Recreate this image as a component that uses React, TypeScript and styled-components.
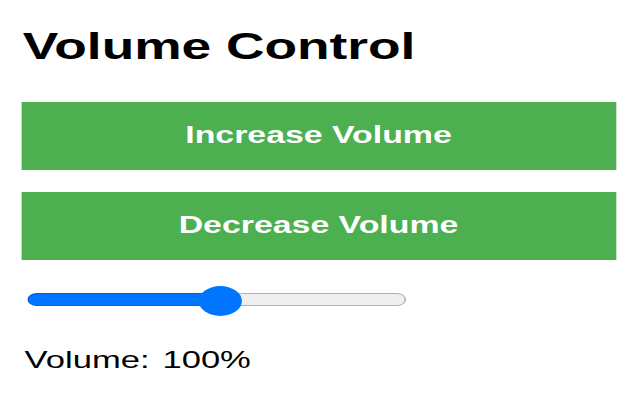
import React, { useState } from 'react';
import styled, { createGlobalStyle } from 'styled-components';

const STRETCH = 1.44;

const GlobalStyle = createGlobalStyle`
  html, body {
    margin: 0;
    padding: 0;
    background: #ffffff;
  }
  body {
    font-family: "Liberation Sans", Arial, sans-serif;
    overflow: hidden;
  }
`;

function App() {
  const [volume, setVolume] = useState(51);

  const increase = () => setVolume((v) => Math.min(100, v + 10));
  const decrease = () => setVolume((v) => Math.max(0, v - 10));

  return (
    <>
      <GlobalStyle />
      <Page>
        <Title>Volume Control</Title>
        <Buttons>
          <ActionButton onClick={increase}>Increase Volume</ActionButton>
          <ActionButton onClick={decrease}>Decrease Volume</ActionButton>
        </Buttons>
        <Slider
          type="range"
          min={0}
          max={100}
          value={volume}
          onChange={(e) => setVolume(Number(e.target.value))}
          style={{ ['--fill' as string]: `${volume}%` }}
        />
        <Label>
          Volume:<Value>100%</Value>
        </Label>
      </Page>
    </>
  );
}

export default App;

const Page = styled.main`
  width: ${640 / STRETCH}px;
  box-sizing: border-box;
  padding: 27.6px 0 0 14.6px;
  display: flex;
  flex-direction: column;
  transform: scaleX(${STRETCH});
  transform-origin: 0 0;
`;

const Title = styled.h1`
  margin: 0 0 0 1.2px;
  font-size: 37px;
  line-height: 37px;
  font-weight: 700;
  color: #000;
`;

const Buttons = styled.div`
  margin-top: 37.4px;
  display: flex;
  flex-direction: column;
  gap: 22px;
`;

const ActionButton = styled.button`
  width: 413.2px;
  height: 68px;
  border: none;
  border-radius: 0;
  padding: 0;
  background: #4caf50;
  color: #fff;
  font-family: "Liberation Sans", Arial, sans-serif;
  font-size: 23.5px;
  font-weight: 700;
  cursor: pointer;
`;

const Slider = styled.input`
  -webkit-appearance: none;
  appearance: none;
  margin: 25px 0 0 4.8px;
  width: 263px;
  height: 30px;
  background: transparent;

  &::-webkit-slider-runnable-track {
    height: 13px;
    border: 1px solid transparent;
    border-radius: 8px;
    background:
      linear-gradient(to right, #0075ff var(--fill), #efefef var(--fill)) padding-box,
      linear-gradient(to right, #0062d6 var(--fill), #b2b2b2 var(--fill)) border-box;
  }

  &::-webkit-slider-thumb {
    -webkit-appearance: none;
    appearance: none;
    width: 30px;
    height: 30px;
    margin-top: -8.5px;
    border: none;
    border-radius: 50%;
    background: #0075ff;
  }
`;

const Label = styled.p`
  margin: 33.2px 0 0 2.5px;
  font-size: 24px;
  line-height: 24px;
  color: #000;
`;

const Value = styled.span`
  margin-left: 9px;
`;
